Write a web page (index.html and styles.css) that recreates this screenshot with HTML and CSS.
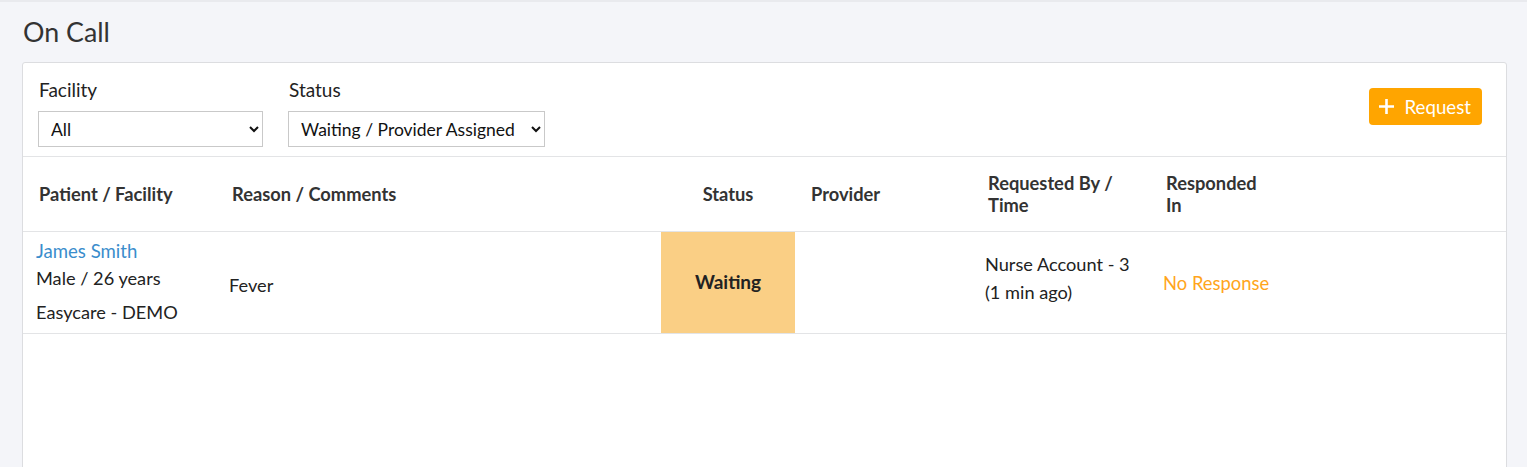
FILE: index.html
```html
<!DOCTYPE html>
<html lang="en">
<head>
    <meta charset="UTF-8">
    <meta name="viewport" content="width=device-width, initial-scale=1.0">
    <title>On Call</title>
    <link rel="stylesheet" href="styles.css">
</head>
<body>
    <div class="page">
        <h1 class="page-title">On Call</h1>

        <div class="card">
            <div class="filters">
                <div class="filter-group">
                    <label for="facility">Facility</label>
                    <select id="facility" class="filter-select facility-select">
                        <option>All</option>
                    </select>
                </div>
                <div class="filter-group">
                    <label for="status">Status</label>
                    <select id="status" class="filter-select status-select">
                        <option>Waiting / Provider Assigned</option>
                    </select>
                </div>
                <button type="button" class="request-button">
                    <svg width="15" height="15" viewBox="0 0 15 15"><path d="M7.5 0v15M0 7.5h15" stroke="#fff" stroke-width="2.6"/></svg>
                    Request
                </button>
            </div>

            <table class="oncall-table">
                <colgroup>
                    <col style="width: 193px">
                    <col style="width: 445px">
                    <col style="width: 134px">
                    <col style="width: 177px">
                    <col style="width: 178px">
                    <col style="width: 128px">
                    <col>
                </colgroup>
                <thead>
                    <tr>
                        <th>Patient / Facility</th>
                        <th>Reason / Comments</th>
                        <th class="center">Status</th>
                        <th>Provider</th>
                        <th>Requested By / Time</th>
                        <th>Responded In</th>
                        <th></th>
                    </tr>
                </thead>
                <tbody>
                    <tr>
                        <td>
                            <a href="#" class="patient-name">James Smith</a>
                            <div class="patient-info">Male / 26 years</div>
                            <div class="patient-facility">Easycare - DEMO</div>
                        </td>
                        <td class="reason">Fever</td>
                        <td class="status-cell status-waiting">Waiting</td>
                        <td></td>
                        <td class="requested">Nurse Account - 3<br>(1 min ago)</td>
                        <td class="no-response">No Response</td>
                        <td></td>
                    </tr>
                </tbody>
            </table>
        </div>
    </div>
</body>
</html>
```

FILE: styles.css
```css
* {
    margin: 0;
    padding: 0;
    box-sizing: border-box;
    font-family: 'Lato', 'Liberation Sans', sans-serif;
}

body {
    background-color: #f4f5f9;
    border-top: 2px solid #e9eaee;
    color: #222;
    height: 467px;
    overflow: hidden;
}

.page {
    padding: 14px 20px 0 22px;
}

.page-title {
    font-size: 26.8px;
    font-weight: 400;
    color: #333;
    margin-left: 1px;
    line-height: 32px;
    margin-bottom: 14px;
}

.card {
    background: white;
    border: 1px solid #dcdde0;
    border-radius: 3px;
    height: 460px;
}

.filters {
    display: flex;
    align-items: flex-start;
    gap: 25px;
    padding: 17px 24px 9px 15px;
    border-bottom: 1px solid #e3e4e6;
}

.filter-group label {
    display: block;
    font-size: 19px;
    color: #222;
    margin-left: 1px;
    margin-bottom: 11px;
    line-height: 20px;
}

.filter-select {
    height: 36px;
    border: 1px solid #c9c9c9;
    border-radius: 0;
    background: white;
    font-size: 17.5px;
    padding: 0 6px 0 8px;
    color: #111;
}

.facility-select {
    width: 225px;
}

.status-select {
    width: 257px;
}

.request-button {
    margin-left: auto;
    margin-top: 8px;
    display: flex;
    align-items: center;
    gap: 10px;
    height: 37px;
    padding: 0 11px 0 10px;
    background: #ffa500;
    color: white;
    border: none;
    border-radius: 4px;
    font-size: 18.7px;
    cursor: pointer;
}

.oncall-table {
    width: 100%;
    border-collapse: collapse;
    table-layout: fixed;
}

.oncall-table th {
    text-align: left;
    font-size: 18.3px;
    font-weight: 700;
    color: #333;
    line-height: 22px;
    height: 74px;
    padding: 0 16px;
    border-bottom: 1px solid #e3e4e6;
}

.oncall-table th.center {
    text-align: center;
}

.oncall-table td {
    font-size: 18.2px;
    line-height: 22px;
    height: 102px;
    padding: 0 13px;
    border-bottom: 1px solid #e3e4e6;
    vertical-align: middle;
}

.patient-name {
    display: block;
    color: #3a8dcc;
    font-size: 18.6px;
    text-decoration: none;
    margin-top: -2px;
}

.patient-info {
    margin-top: 5px;
}

.patient-facility {
    margin-top: 12px;
}

.oncall-table td.reason {
    padding-top: 6px;
}

.oncall-table td.status-cell {
    text-align: center;
    font-weight: 700;
    font-size: 19px;
    padding-top: 0;
}

.status-waiting {
    background: #facf85;
}

.oncall-table td.requested {
    line-height: 28px;
    padding-bottom: 8px;
}

.oncall-table td.no-response {
    color: #ffa51c;
    font-size: 18.4px;
    white-space: nowrap;
    padding-top: 2px;
}
```
